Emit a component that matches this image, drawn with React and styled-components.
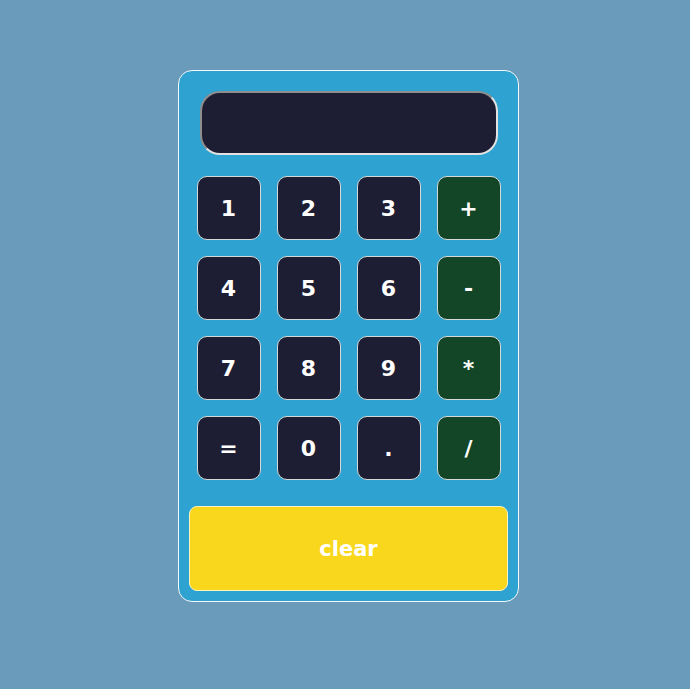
import React from 'react';
import styled, { createGlobalStyle } from 'styled-components';

const GlobalStyle = createGlobalStyle`
  html, body {
    margin: 0;
    padding: 0;
    background-color: #6b9bba;
    font-family: "DejaVu Sans", Verdana, sans-serif;
  }
`;

const Page = styled.div`
  min-height: 689px;
  padding: 70px 0 0 178px;
  box-sizing: border-box;
`;

const Calculator = styled.div`
  width: 341px;
  box-sizing: border-box;
  background-color: #2ea2d0;
  border: 1px solid #f4f8fb;
  border-radius: 14px;
  padding: 20px 10px 10px;
  display: flex;
  flex-direction: column;
  align-items: center;
`;

const Display = styled.input`
  width: 298px;
  height: 64px;
  box-sizing: border-box;
  background-color: #1d1d33;
  border: 2px solid;
  border-color: #8e8e8e #e2e2e2 #e2e2e2 #8e8e8e;
  border-radius: 20px;
  color: #fff;
  font-family: inherit;
  font-size: 24px;
  padding: 0 16px;
  outline: none;
`;

const Keys = styled.div`
  margin-top: 21px;
  display: grid;
  grid-template-columns: repeat(4, 64px);
  grid-auto-rows: 64px;
  gap: 16px;
`;

const Key = styled.button`
  box-sizing: border-box;
  background-color: ${({ $op }) => ($op ? '#134626' : '#1d1d33')};
  border: 1px solid #d8d8d8;
  border-radius: 10px;
  color: #fff;
  font-family: "DejaVu Sans", Verdana, sans-serif;
  font-weight: bold;
  font-size: 22px;
  padding: 0;
  cursor: pointer;
  display: flex;
  align-items: center;
  justify-content: center;
`;

const ClearButton = styled.button`
  margin-top: 26px;
  width: 100%;
  height: 85px;
  box-sizing: border-box;
  background-color: #f9d71c;
  border: 1px solid #fdf3c0;
  border-radius: 8px;
  color: #fff;
  font-family: "DejaVu Sans", Verdana, sans-serif;
  font-weight: bold;
  font-size: 21px;
  cursor: pointer;
`;

const keys = [
  ['1', false], ['2', false], ['3', false], ['+', true],
  ['4', false], ['5', false], ['6', false], ['-', true],
  ['7', false], ['8', false], ['9', false], ['*', true],
  ['=', false], ['0', false], ['.', false], ['/', true],
];

const App = () => {
  return (
    <Page>
      <GlobalStyle />
      <Calculator>
        <Display type="text" readOnly value="" />
        <Keys>
          {keys.map(([label, op]) => (
            <Key key={label} $op={op}>
              {label}
            </Key>
          ))}
        </Keys>
        <ClearButton>clear</ClearButton>
      </Calculator>
    </Page>
  );
};

export default App;
